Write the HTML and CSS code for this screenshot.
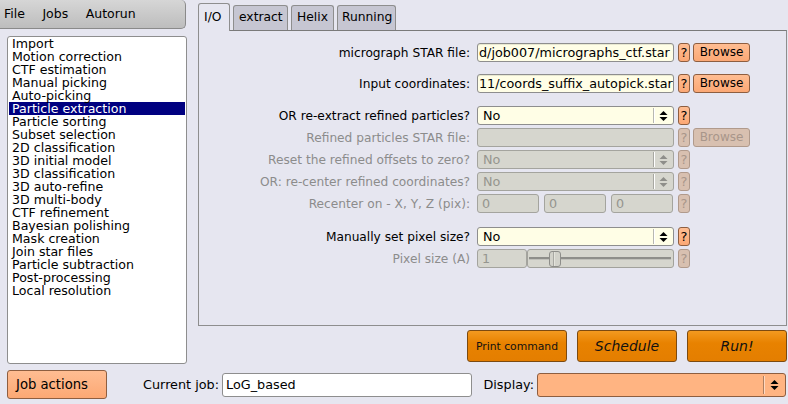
FILE: index.html
```html
<!DOCTYPE html>
<html>
<head>
<meta charset="utf-8">
<link rel="stylesheet" href="styles.css">
</head>
<body>
<div class="app">
  <div class="main">
    <div class="left">
      <div class="menubar"><span>File</span><span>Jobs</span><span>Autorun</span></div>
      <div class="joblist">
        <div class="item">Import</div>
        <div class="item">Motion correction</div>
        <div class="item">CTF estimation</div>
        <div class="item">Manual picking</div>
        <div class="item">Auto-picking</div>
        <div class="item sel">Particle extraction</div>
        <div class="item">Particle sorting</div>
        <div class="item">Subset selection</div>
        <div class="item">2D classification</div>
        <div class="item">3D initial model</div>
        <div class="item">3D classification</div>
        <div class="item">3D auto-refine</div>
        <div class="item">3D multi-body</div>
        <div class="item">CTF refinement</div>
        <div class="item">Bayesian polishing</div>
        <div class="item">Mask creation</div>
        <div class="item">Join star files</div>
        <div class="item">Particle subtraction</div>
        <div class="item">Post-processing</div>
        <div class="item">Local resolution</div>
      </div>
    </div>
    <div class="right">
      <div class="tabs">
        <div class="tab active t-io">I/O</div>
        <div class="tab t-extract">extract</div>
        <div class="tab t-helix">Helix</div>
        <div class="tab t-running">Running</div>
      </div>
      <div class="panel">
        <div class="row">
          <div class="label">micrograph STAR file:</div>
          <div class="field input">d/job007/micrographs_ctf.star</div>
          <div class="qbtn">?</div>
          <div class="browse">Browse</div>
        </div>
        <div class="row g12">
          <div class="label">Input coordinates:</div>
          <div class="field input">11/coords_suffix_autopick.star</div>
          <div class="qbtn">?</div>
          <div class="browse">Browse</div>
        </div>
        <div class="row g13">
          <div class="label">OR re-extract refined particles?</div>
          <div class="field select"><span class="val">No</span><span class="arrows"><svg width="9" height="10" viewBox="0 0 9 10"><path d="M0.5 4 L4.5 0 L8.5 4 Z M0.5 6 L8.5 6 L4.5 10 Z" fill="#000"/></svg></span></div>
          <div class="qbtn">?</div>
        </div>
        <div class="row dis">
          <div class="label">Refined particles STAR file:</div>
          <div class="field input"></div>
          <div class="qbtn">?</div>
          <div class="browse">Browse</div>
        </div>
        <div class="row dis">
          <div class="label">Reset the refined offsets to zero?</div>
          <div class="field select"><span class="val">No</span><span class="arrows"><svg width="9" height="10" viewBox="0 0 9 10"><path d="M0.5 4 L4.5 0 L8.5 4 Z M0.5 6 L8.5 6 L4.5 10 Z" fill="#8e8e8a"/></svg></span></div>
          <div class="qbtn">?</div>
        </div>
        <div class="row dis">
          <div class="label">OR: re-center refined coordinates?</div>
          <div class="field select"><span class="val">No</span><span class="arrows"><svg width="9" height="10" viewBox="0 0 9 10"><path d="M0.5 4 L4.5 0 L8.5 4 Z M0.5 6 L8.5 6 L4.5 10 Z" fill="#8e8e8a"/></svg></span></div>
          <div class="qbtn">?</div>
        </div>
        <div class="row dis">
          <div class="label">Recenter on - X, Y, Z (pix):</div>
          <div class="triple">
            <div class="input small">0</div>
            <div class="input small">0</div>
            <div class="input small">0</div>
          </div>
          <div class="qbtn">?</div>
        </div>
        <div class="row g14">
          <div class="label">Manually set pixel size?</div>
          <div class="field select"><span class="val">No</span><span class="arrows"><svg width="9" height="10" viewBox="0 0 9 10"><path d="M0.5 4 L4.5 0 L8.5 4 Z M0.5 6 L8.5 6 L4.5 10 Z" fill="#000"/></svg></span></div>
          <div class="qbtn">?</div>
        </div>
        <div class="row dis">
          <div class="label">Pixel size (A)</div>
          <div class="pixrow">
            <div class="input pix">1</div>
            <div class="slider"><div class="thumb"></div></div>
          </div>
          <div class="qbtn">?</div>
        </div>
      </div>
      <div class="actions">
        <div class="abtn print">Print command</div>
        <div class="abtn big">Schedule</div>
        <div class="abtn big">Run!</div>
      </div>
    </div>
  </div>
  <div class="bottom">
    <div class="jobactions">Job actions</div>
    <div class="blabel cj">Current job:</div>
    <div class="jobname">LoG_based</div>
    <div class="blabel disp">Display:</div>
    <div class="display"><span class="val"></span><span class="arrows"><svg width="9" height="10" viewBox="0 0 9 10"><path d="M0.5 4 L4.5 0 L8.5 4 Z M0.5 6 L8.5 6 L4.5 10 Z" fill="#000"/></svg></span></div>
  </div>
</div>
</body>
</html>
```
FILE: styles.css
```css
* { box-sizing: border-box; }
html, body { margin: 0; padding: 0; }
body {
  background: #e6e6f0;
  font-family: "DejaVu Sans", "Liberation Sans", sans-serif;
  color: #000;
}
.app {
  width: 788px;
  height: 404px;
  overflow: hidden;
  display: flex;
  flex-direction: column;
  background: #e6e6f0;
}
.main { display: flex; height: 366px; }
.left { width: 198px; flex: none; }
.menubar {
  width: 186px;
  height: 29px;
  display: flex;
  align-items: center;
  gap: 17.5px;
  padding: 0 0 1px 4px;
  font-size: 12.5px;
  background: linear-gradient(#d6d6d6, #bdbdbd);
  border-right: 1px solid #8a8a8a;
  border-bottom: 1px solid #8a8a8a;
  border-radius: 0 5px 5px 0;
}
.joblist {
  margin: 7px 0 0 7px;
  width: 180px;
  height: 328px;
  background: #fff;
  border: 1px solid #8e8e8e;
  border-radius: 3px;
  padding: 0 1px;
  font-size: 12.6px;
}
.item {
  height: 13px;
  line-height: 13px;
  padding-left: 3px;
  white-space: nowrap;
}
.item.sel { background: #000080; color: #fff; }

.right { width: 589px; flex: none; display: flex; flex-direction: column; }
.tabs {
  height: 30px;
  display: flex;
  align-items: flex-end;
  gap: 3px;
  font-size: 12.3px;
  position: relative;
  z-index: 1;
}
.tab {
  height: 25px;
  padding: 4px 0 0 5px;
  background: #c6c6d2;
  border: 1px solid #8e8e8e;
  border-bottom: none;
  border-radius: 3px 3px 0 0;
  white-space: nowrap;
}
.tab.active {
  height: 28px;
  margin-bottom: -1px;
  padding-top: 6px;
  background: #e6e6f0;
}
.t-io { width: 32px; }
.t-extract { width: 55px; }
.t-helix { width: 43px; }
.t-running { width: 59px; padding-left: 4px; }

.panel {
  height: 296px;
  border: 1px solid #8e8e8e;
  border-top-color: #7a7a7a;
  padding-top: 12px;
  background: #e6e6f0;
}
.row {
  display: flex;
  align-items: center;
  height: 19px;
  margin-bottom: 3px;
}
.row.g12 { margin-top: 12px; }
.row.g13 { margin-top: 13px; }
.row.g14 { margin-top: 14px; }
.label {
  width: 274px;
  flex: none;
  text-align: right;
  padding-right: 3px;
  font-size: 12.2px;
  white-space: nowrap;
}
.field, .triple, .pixrow {
  margin-left: 4px;
  width: 197px;
  height: 19px;
  flex: none;
}
.input {
  height: 19px;
  background: #fffee6;
  border: 1px solid #8e8e8e;
  border-radius: 3px;
  box-shadow: inset 0 1px 0 #e8e8d0;
  font-size: 12.75px;
  line-height: 17px;
  padding-left: 1px;
  white-space: nowrap;
  overflow: hidden;
}
.select {
  display: flex;
  background: #fffee6;
  border: 1px solid #8e8e8e;
  border-radius: 3px;
  font-size: 12.75px;
  line-height: 17px;
}
.select .val { flex: 1; padding-left: 5px; }
.arrows {
  width: 20px;
  flex: none;
  display: flex;
  align-items: center;
  justify-content: center;
  border-left: 1px solid #b8b8b0;
  box-shadow: inset 1px 0 0 #fff;
  margin: 1px 0;
}
.qbtn {
  margin-left: 4px;
  width: 12px;
  height: 19px;
  flex: none;
  background: linear-gradient(#ffbd92, #fba875);
  border: 1px solid #8e5e40;
  border-radius: 3px;
  font-size: 13px;
  line-height: 17px;
  text-align: center;
}
.browse {
  margin-left: 3px;
  width: 57px;
  height: 19px;
  flex: none;
  background: linear-gradient(#ffbd92, #fba875);
  border: 1px solid #8e5e40;
  border-radius: 3px;
  font-size: 12px;
  line-height: 17px;
  text-align: center;
}
.triple { display: flex; gap: 5px; }
.input.small { width: 62px; padding-left: 4px; }
.pixrow { display: flex; }
.input.pix { width: 50px; padding-left: 4px; flex: none; }
.slider {
  flex: 1;
  height: 19px;
  border: 1px solid #a2a29c;
  border-radius: 3px;
  background: linear-gradient(to bottom, transparent 7px, #8e8e8a 7px, #8e8e8a 9px, #c0c0ba 9px, #c0c0ba 10px, transparent 10px) #d6d6ce;
  background-size: 142px 100%;
  background-position: 1px 0;
  background-repeat: no-repeat;
  padding-left: 21px;
  display: flex;
  align-items: center;
}
.thumb {
  width: 12px;
  height: 16px;
  border: 1px solid #8e8e8a;
  border-radius: 3px;
  background: linear-gradient(to right, #d2d2ca 3px, #a8a8a2 3px, #a8a8a2 4px, #e4e4dc 4px, #e4e4dc 5px, #d2d2ca 5px);
}

/* disabled rows */
.row.dis .label { color: #8c8c8c; }
.row.dis .input, .row.dis .select {
  background: #d6d6ce;
  border-color: #a4a49e;
  box-shadow: none;
  color: #95958f;
}
.row.dis .arrows { border-left-color: #a8a8a2; }
.row.dis .qbtn, .row.dis .browse {
  background: #d8c0b0;
  border-color: #b09a8c;
  color: #a8968a;
}

.actions {
  margin-top: 4px;
  height: 32px;
  display: flex;
  justify-content: flex-end;
  gap: 10px;
}
.abtn {
  width: 100px;
  height: 32px;
  background: linear-gradient(#f39a20, #e88200 40%, #e47e00);
  border: 1px solid #7c4a10;
  border-radius: 3px;
  display: flex;
  align-items: center;
  justify-content: center;
  color: #111;
}
.abtn.print { font-size: 10.8px; }
.abtn.big { font-size: 14px; font-style: italic; }

.bottom {
  height: 38px;
  display: flex;
  align-items: flex-start;
  padding-top: 4px;
  font-size: 12.8px;
}
.jobactions {
  margin-left: 7px;
  width: 100px;
  height: 29px;
  background: linear-gradient(#ffbd92, #fca874);
  border: 1px solid #8e5e40;
  border-radius: 3px;
  padding-left: 8px;
  line-height: 27px;
  font-size: 13.2px;
}
.blabel {
  height: 24px;
  margin-top: 3px;
  line-height: 24px;
  text-align: right;
  padding-right: 3px;
  white-space: nowrap;
}
.blabel.cj { width: 115px; }
.blabel.disp { width: 65px; }
.jobname {
  margin-top: 3px;
  width: 250px;
  height: 24px;
  background: #fff;
  border: 1px solid #8e8e8e;
  border-radius: 3px;
  padding-left: 3px;
  line-height: 22px;
}
.display {
  margin-top: 3px;
  width: 249px;
  height: 24px;
  display: flex;
  background: #ffb482;
  border: 1px solid #8e5e40;
  border-radius: 3px;
}
.display .val { flex: 1; }
.display .arrows { width: 22px; border-left-color: #b08060; box-shadow: inset 1px 0 0 #ffd8c0; margin: 2px 0; }
```
